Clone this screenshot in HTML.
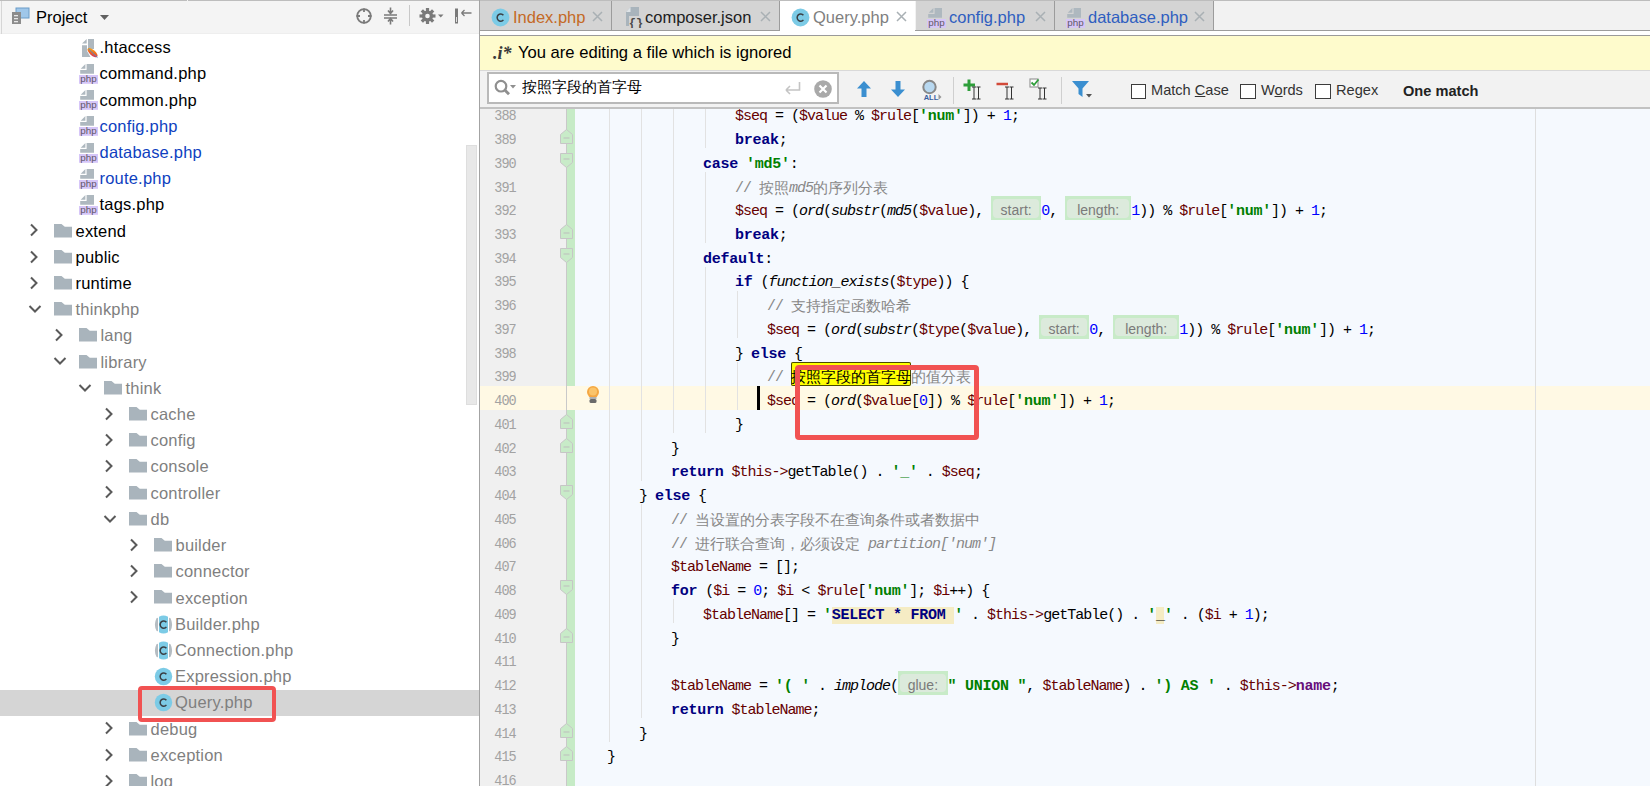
<!DOCTYPE html><html><head><meta charset="utf-8"><style>
html,body{margin:0;padding:0}
body{width:1650px;height:786px;overflow:hidden;position:relative;background:#fff;font-family:"Liberation Sans",sans-serif}
.t{position:absolute;white-space:nowrap;line-height:1;font-family:"Liberation Sans",sans-serif}
.cjk{position:absolute;white-space:nowrap;overflow:hidden;line-height:18px;font-family:"Liberation Sans",sans-serif;letter-spacing:0}
.ln{position:absolute;left:480px;width:35.8px;text-align:right;font-family:"Liberation Mono",monospace;font-size:15px;letter-spacing:-1px;line-height:16px;color:#a2a2a2;transform:scaleX(0.9);transform-origin:right center}
.cl{position:absolute;white-space:pre;font-family:"Liberation Mono",monospace;font-size:15px;letter-spacing:-1px;line-height:16px;color:#000}
.v{color:#660000}
.k{color:#000080;font-weight:bold;letter-spacing:-0.25px}
.s{color:#008000;font-weight:bold;letter-spacing:-0.25px}
.n{color:#0000ff}
.f{font-style:italic}
.c{color:#888888}
.c i{font-style:italic}
.z{display:inline-block;overflow:hidden;vertical-align:top;height:16px;font-family:"Liberation Sans",sans-serif;letter-spacing:0;font-size:14.5px;line-height:14px}
.fld{color:#660e7a;font-weight:bold;letter-spacing:-0.25px}
.mk{background:#ffff00;box-shadow:inset 0 0 0 1px #4a4a00;border-radius:2px;color:#000;display:inline-block;vertical-align:top;height:23.5px;position:relative;top:-8.2px}
.mk .z{position:relative;top:8.2px}
.sql{background:#f5ecc4;color:#000080;font-weight:bold;letter-spacing:-0.25px}
.sql2{background:#f5ecc4;color:#000;font-weight:normal;letter-spacing:-1px}
.hint{display:inline-block;vertical-align:top;position:relative;height:16px}
.hint>b{position:absolute;display:block;font-weight:normal;font-style:normal}
.ho{left:0;right:0;top:-8px;height:23.7px;background:#c8ebc8}
.hi{left:2px;right:2px;top:-5.4px;height:18.8px;background:#dceadc;border-radius:4px}
.ht{left:0;right:0;top:-8px;height:23.7px;color:#7a7a7a;font-family:"Liberation Sans",sans-serif;font-size:14px;letter-spacing:0;line-height:28px;text-align:center}
</style></head><body><div style="position:absolute;left:0px;top:0px;width:479px;height:34px;background:#f4f4f4;"></div>
<div style="position:absolute;left:0px;top:33px;width:479px;height:1px;background:#eeeeee;"></div>
<div style="position:absolute;left:0px;top:0px;width:1650px;height:1px;background:#bdbdbd;"></div>
<div style="position:absolute;left:187px;top:0px;width:1px;height:1px;background:#f4f4f4;"></div>
<div style="position:absolute;left:1px;top:1px;width:1px;height:33px;background:#d6d6d6;"></div>
<svg style="position:absolute;left:11px;top:7px" width="20" height="18" viewBox="0 0 20 18">
<rect x="5" y="1" width="13" height="10" fill="#9fc7ea" stroke="#6a9cc8" stroke-width="1"/>
<rect x="1" y="5" width="9" height="12" fill="#8c8c8c"/>
<rect x="3" y="8" width="4" height="1.3" fill="#e8e8e8"/><rect x="3" y="11" width="4" height="1.3" fill="#e8e8e8"/><rect x="3" y="14" width="4" height="1.3" fill="#e8e8e8"/>
</svg>
<div class="t" style="left:36px;top:9.28px;font-size:16.5px;color:#000;font-weight:400;">Project</div>
<svg style="position:absolute;left:99px;top:14px" width="11" height="7"><path d="M1 1 L10 1 L5.5 6 Z" fill="#606060"/></svg>
<svg style="position:absolute;left:355px;top:7px" width="18" height="18" viewBox="0 0 18 18">
<circle cx="9" cy="9" r="6.8" fill="none" stroke="#7a7a7a" stroke-width="1.8"/>
<path d="M9 1.5V5 M9 13V16.5 M1.5 9H5 M13 9H16.5" stroke="#7a7a7a" stroke-width="1.8"/></svg>
<svg style="position:absolute;left:383px;top:7px" width="15" height="18" viewBox="0 0 15 18">
<path d="M1 8H14 M1 11H14" stroke="#7a7a7a" stroke-width="1.4"/>
<path d="M7.5 0.5V5 M5 3.5L7.5 6.5L10 3.5 M7.5 17.5V13 M5 14.5L7.5 11.5L10 14.5" stroke="#7a7a7a" stroke-width="1.6" fill="none"/></svg>
<div style="position:absolute;left:409px;top:5px;width:1px;height:21px;background:#c8c8c8;"></div>
<svg style="position:absolute;left:418px;top:7px" width="28" height="18" viewBox="0 0 28 18">
<g transform="translate(9.5,9)" fill="#7a7a7a">
<circle r="5.6"/>
<rect x="-1.6" y="-8" width="3.2" height="16"/><rect x="-1.6" y="-8" width="3.2" height="16" transform="rotate(45)"/>
<rect x="-1.6" y="-8" width="3.2" height="16" transform="rotate(90)"/><rect x="-1.6" y="-8" width="3.2" height="16" transform="rotate(135)"/>
</g><circle cx="9.5" cy="9" r="2.3" fill="#f4f4f4"/>
<path d="M20 7.5H25.5L22.75 10.5Z" fill="#7a7a7a"/></svg>
<svg style="position:absolute;left:453px;top:7px" width="20" height="18" viewBox="0 0 20 18">
<rect x="2" y="1.5" width="3" height="15" fill="#7a7a7a"/><rect x="3" y="10" width="1" height="5" fill="#e0e0e0"/>
<path d="M8.5 6H18.5 M8.5 6L11.5 3 M8.5 6L11.5 9" stroke="#7a7a7a" stroke-width="1.3" fill="none"/></svg>
<div style="position:absolute;left:0px;top:690.0px;width:479px;height:26px;background:#d5d5d5;"></div>
<div style="position:absolute;left:466px;top:145px;width:11px;height:260px;background:#e8e8e8;border:1px solid #dedede;box-sizing:border-box"></div>
<svg style="position:absolute;left:82px;top:38.66px" width="17" height="20" viewBox="0 0 17 20"><defs><linearGradient id="fg" x1="0" y1="0" x2="1" y2="1"><stop offset="0" stop-color="#f5c020"/><stop offset="0.5" stop-color="#f26a1e"/><stop offset="1" stop-color="#c8207a"/></linearGradient></defs><path d="M0 4.6L4.7 0V4.6Z" fill="#aeb8bf"/><path d="M6 0H12V10H6Z" fill="#aeb8bf"/><path d="M0 6.3H5V12L8.5 18H0Z" fill="#aeb8bf"/><ellipse cx="10.5" cy="13.6" rx="6.3" ry="2.8" transform="rotate(42 10.5 13.6)" fill="url(#fg)"/><path d="M6.5 9.8L15.5 18.6" stroke="#4a90c8" stroke-width="0.9"/></svg>
<div class="t" style="left:99.5px;top:39.12px;font-size:16.5px;color:#000;font-weight:400;letter-spacing:0.2px">.htaccess</div>
<svg style="position:absolute;left:79px;top:63.86px" width="19" height="20" viewBox="0 0 19 20"><path d="M1.7 4.8L6.4 0.1V4.8Z" fill="#aeb8bf"/><path d="M7.6 0H15V9.8H1.2V6H7.6Z" fill="#aeb8bf"/><rect x="0" y="11" width="19" height="8.8" fill="#d6c6f8"/><text x="9.5" y="18.3" font-family="Liberation Sans" font-size="9.8" text-anchor="middle" fill="#5e5666">php</text></svg>
<div class="t" style="left:99.5px;top:65.33px;font-size:16.5px;color:#000;font-weight:400;letter-spacing:0.2px">command.php</div>
<svg style="position:absolute;left:79px;top:90.08px" width="19" height="20" viewBox="0 0 19 20"><path d="M1.7 4.8L6.4 0.1V4.8Z" fill="#aeb8bf"/><path d="M7.6 0H15V9.8H1.2V6H7.6Z" fill="#aeb8bf"/><rect x="0" y="11" width="19" height="8.8" fill="#d6c6f8"/><text x="9.5" y="18.3" font-family="Liberation Sans" font-size="9.8" text-anchor="middle" fill="#5e5666">php</text></svg>
<div class="t" style="left:99.5px;top:91.54px;font-size:16.5px;color:#000;font-weight:400;letter-spacing:0.2px">common.php</div>
<svg style="position:absolute;left:79px;top:116.28px" width="19" height="20" viewBox="0 0 19 20"><path d="M1.7 4.8L6.4 0.1V4.8Z" fill="#aeb8bf"/><path d="M7.6 0H15V9.8H1.2V6H7.6Z" fill="#aeb8bf"/><rect x="0" y="11" width="19" height="8.8" fill="#d6c6f8"/><text x="9.5" y="18.3" font-family="Liberation Sans" font-size="9.8" text-anchor="middle" fill="#5e5666">php</text></svg>
<div class="t" style="left:99.5px;top:117.75px;font-size:16.5px;color:#0f3fc0;font-weight:400;letter-spacing:0.2px">config.php</div>
<svg style="position:absolute;left:79px;top:142.50px" width="19" height="20" viewBox="0 0 19 20"><path d="M1.7 4.8L6.4 0.1V4.8Z" fill="#aeb8bf"/><path d="M7.6 0H15V9.8H1.2V6H7.6Z" fill="#aeb8bf"/><rect x="0" y="11" width="19" height="8.8" fill="#d6c6f8"/><text x="9.5" y="18.3" font-family="Liberation Sans" font-size="9.8" text-anchor="middle" fill="#5e5666">php</text></svg>
<div class="t" style="left:99.5px;top:143.97px;font-size:16.5px;color:#0f3fc0;font-weight:400;letter-spacing:0.2px">database.php</div>
<svg style="position:absolute;left:79px;top:168.71px" width="19" height="20" viewBox="0 0 19 20"><path d="M1.7 4.8L6.4 0.1V4.8Z" fill="#aeb8bf"/><path d="M7.6 0H15V9.8H1.2V6H7.6Z" fill="#aeb8bf"/><rect x="0" y="11" width="19" height="8.8" fill="#d6c6f8"/><text x="9.5" y="18.3" font-family="Liberation Sans" font-size="9.8" text-anchor="middle" fill="#5e5666">php</text></svg>
<div class="t" style="left:99.5px;top:170.18px;font-size:16.5px;color:#0f3fc0;font-weight:400;letter-spacing:0.2px">route.php</div>
<svg style="position:absolute;left:79px;top:194.91px" width="19" height="20" viewBox="0 0 19 20"><path d="M1.7 4.8L6.4 0.1V4.8Z" fill="#aeb8bf"/><path d="M7.6 0H15V9.8H1.2V6H7.6Z" fill="#aeb8bf"/><rect x="0" y="11" width="19" height="8.8" fill="#d6c6f8"/><text x="9.5" y="18.3" font-family="Liberation Sans" font-size="9.8" text-anchor="middle" fill="#5e5666">php</text></svg>
<div class="t" style="left:99.5px;top:196.38px;font-size:16.5px;color:#000;font-weight:400;letter-spacing:0.2px">tags.php</div>
<svg style="position:absolute;left:29px;top:223.32px" width="10" height="14"><path d="M2 1.5L7.5 7L2 12.5" stroke="#5a5a5a" stroke-width="2" fill="none"/></svg>
<svg style="position:absolute;left:54px;top:223.52px" width="18" height="14"><path d="M0 0H7.5L10.8 2.8H18V13.6H0Z" fill="#a9b4bc"/></svg>
<div class="t" style="left:75.5px;top:222.59px;font-size:16.5px;color:#000;font-weight:400;letter-spacing:0.2px">extend</div>
<svg style="position:absolute;left:29px;top:249.54px" width="10" height="14"><path d="M2 1.5L7.5 7L2 12.5" stroke="#5a5a5a" stroke-width="2" fill="none"/></svg>
<svg style="position:absolute;left:54px;top:249.74px" width="18" height="14"><path d="M0 0H7.5L10.8 2.8H18V13.6H0Z" fill="#a9b4bc"/></svg>
<div class="t" style="left:75.5px;top:248.80px;font-size:16.5px;color:#000;font-weight:400;letter-spacing:0.2px">public</div>
<svg style="position:absolute;left:29px;top:275.75px" width="10" height="14"><path d="M2 1.5L7.5 7L2 12.5" stroke="#5a5a5a" stroke-width="2" fill="none"/></svg>
<svg style="position:absolute;left:54px;top:275.94px" width="18" height="14"><path d="M0 0H7.5L10.8 2.8H18V13.6H0Z" fill="#a9b4bc"/></svg>
<div class="t" style="left:75.5px;top:275.01px;font-size:16.5px;color:#000;font-weight:400;letter-spacing:0.2px">runtime</div>
<svg style="position:absolute;left:28px;top:303.96px" width="14" height="10"><path d="M1.5 2L7 7.5L12.5 2" stroke="#5a5a5a" stroke-width="2" fill="none"/></svg>
<svg style="position:absolute;left:54px;top:302.16px" width="18" height="14"><path d="M0 0H7.5L10.8 2.8H18V13.6H0Z" fill="#a9b4bc"/></svg>
<div class="t" style="left:75.5px;top:301.23px;font-size:16.5px;color:#7f7f7f;font-weight:400;letter-spacing:0.2px">thinkphp</div>
<svg style="position:absolute;left:54px;top:328.17px" width="10" height="14"><path d="M2 1.5L7.5 7L2 12.5" stroke="#5a5a5a" stroke-width="2" fill="none"/></svg>
<svg style="position:absolute;left:79px;top:328.37px" width="18" height="14"><path d="M0 0H7.5L10.8 2.8H18V13.6H0Z" fill="#a9b4bc"/></svg>
<div class="t" style="left:100.5px;top:327.44px;font-size:16.5px;color:#7f7f7f;font-weight:400;letter-spacing:0.2px">lang</div>
<svg style="position:absolute;left:53px;top:356.38px" width="14" height="10"><path d="M1.5 2L7 7.5L12.5 2" stroke="#5a5a5a" stroke-width="2" fill="none"/></svg>
<svg style="position:absolute;left:79px;top:354.57px" width="18" height="14"><path d="M0 0H7.5L10.8 2.8H18V13.6H0Z" fill="#a9b4bc"/></svg>
<div class="t" style="left:100.5px;top:353.64px;font-size:16.5px;color:#7f7f7f;font-weight:400;letter-spacing:0.2px">library</div>
<svg style="position:absolute;left:78px;top:382.59px" width="14" height="10"><path d="M1.5 2L7 7.5L12.5 2" stroke="#5a5a5a" stroke-width="2" fill="none"/></svg>
<svg style="position:absolute;left:104px;top:380.79px" width="18" height="14"><path d="M0 0H7.5L10.8 2.8H18V13.6H0Z" fill="#a9b4bc"/></svg>
<div class="t" style="left:125.5px;top:379.86px;font-size:16.5px;color:#7f7f7f;font-weight:400;letter-spacing:0.2px">think</div>
<svg style="position:absolute;left:104px;top:406.80px" width="10" height="14"><path d="M2 1.5L7.5 7L2 12.5" stroke="#5a5a5a" stroke-width="2" fill="none"/></svg>
<svg style="position:absolute;left:129px;top:407.00px" width="18" height="14"><path d="M0 0H7.5L10.8 2.8H18V13.6H0Z" fill="#a9b4bc"/></svg>
<div class="t" style="left:150.5px;top:406.06px;font-size:16.5px;color:#7f7f7f;font-weight:400;letter-spacing:0.2px">cache</div>
<svg style="position:absolute;left:104px;top:433.01px" width="10" height="14"><path d="M2 1.5L7.5 7L2 12.5" stroke="#5a5a5a" stroke-width="2" fill="none"/></svg>
<svg style="position:absolute;left:129px;top:433.21px" width="18" height="14"><path d="M0 0H7.5L10.8 2.8H18V13.6H0Z" fill="#a9b4bc"/></svg>
<div class="t" style="left:150.5px;top:432.28px;font-size:16.5px;color:#7f7f7f;font-weight:400;letter-spacing:0.2px">config</div>
<svg style="position:absolute;left:104px;top:459.22px" width="10" height="14"><path d="M2 1.5L7.5 7L2 12.5" stroke="#5a5a5a" stroke-width="2" fill="none"/></svg>
<svg style="position:absolute;left:129px;top:459.42px" width="18" height="14"><path d="M0 0H7.5L10.8 2.8H18V13.6H0Z" fill="#a9b4bc"/></svg>
<div class="t" style="left:150.5px;top:458.49px;font-size:16.5px;color:#7f7f7f;font-weight:400;letter-spacing:0.2px">console</div>
<svg style="position:absolute;left:104px;top:485.43px" width="10" height="14"><path d="M2 1.5L7.5 7L2 12.5" stroke="#5a5a5a" stroke-width="2" fill="none"/></svg>
<svg style="position:absolute;left:129px;top:485.62px" width="18" height="14"><path d="M0 0H7.5L10.8 2.8H18V13.6H0Z" fill="#a9b4bc"/></svg>
<div class="t" style="left:150.5px;top:484.69px;font-size:16.5px;color:#7f7f7f;font-weight:400;letter-spacing:0.2px">controller</div>
<svg style="position:absolute;left:103px;top:513.63px" width="14" height="10"><path d="M1.5 2L7 7.5L12.5 2" stroke="#5a5a5a" stroke-width="2" fill="none"/></svg>
<svg style="position:absolute;left:129px;top:511.83px" width="18" height="14"><path d="M0 0H7.5L10.8 2.8H18V13.6H0Z" fill="#a9b4bc"/></svg>
<div class="t" style="left:150.5px;top:510.91px;font-size:16.5px;color:#7f7f7f;font-weight:400;letter-spacing:0.2px">db</div>
<svg style="position:absolute;left:129px;top:537.85px" width="10" height="14"><path d="M2 1.5L7.5 7L2 12.5" stroke="#5a5a5a" stroke-width="2" fill="none"/></svg>
<svg style="position:absolute;left:154px;top:538.05px" width="18" height="14"><path d="M0 0H7.5L10.8 2.8H18V13.6H0Z" fill="#a9b4bc"/></svg>
<div class="t" style="left:175.5px;top:537.12px;font-size:16.5px;color:#7f7f7f;font-weight:400;letter-spacing:0.2px">builder</div>
<svg style="position:absolute;left:129px;top:564.06px" width="10" height="14"><path d="M2 1.5L7.5 7L2 12.5" stroke="#5a5a5a" stroke-width="2" fill="none"/></svg>
<svg style="position:absolute;left:154px;top:564.26px" width="18" height="14"><path d="M0 0H7.5L10.8 2.8H18V13.6H0Z" fill="#a9b4bc"/></svg>
<div class="t" style="left:175.5px;top:563.33px;font-size:16.5px;color:#7f7f7f;font-weight:400;letter-spacing:0.2px">connector</div>
<svg style="position:absolute;left:129px;top:590.26px" width="10" height="14"><path d="M2 1.5L7.5 7L2 12.5" stroke="#5a5a5a" stroke-width="2" fill="none"/></svg>
<svg style="position:absolute;left:154px;top:590.47px" width="18" height="14"><path d="M0 0H7.5L10.8 2.8H18V13.6H0Z" fill="#a9b4bc"/></svg>
<div class="t" style="left:175.5px;top:589.53px;font-size:16.5px;color:#7f7f7f;font-weight:400;letter-spacing:0.2px">exception</div>
<svg style="position:absolute;left:153.5px;top:614.68px" width="19" height="19" viewBox="0 0 19 19"><path d="M5 1.8 Q9.5 -0.6 14 1.8 V17.2 Q9.5 19.6 5 17.2Z" fill="#7ccbe6"/><path d="M3.2 3.5 Q0.2 9.5 3.2 15.5 Z" fill="#b4bcc2" stroke="#b4bcc2" stroke-width="1.6" stroke-linejoin="round"/><path d="M15.8 3.5 Q18.8 9.5 15.8 15.5 Z" fill="#b4bcc2" stroke="#b4bcc2" stroke-width="1.6" stroke-linejoin="round"/><path d="M12.4 7.3 A3.5 3.7 0 1 0 12.4 11.9" stroke="#3a3f44" stroke-width="1.5" fill="none"/></svg>
<div class="t" style="left:175.0px;top:615.75px;font-size:16.5px;color:#7f7f7f;font-weight:400;letter-spacing:0.2px">Builder.php</div>
<svg style="position:absolute;left:153.5px;top:640.89px" width="19" height="19" viewBox="0 0 19 19"><path d="M5 1.8 Q9.5 -0.6 14 1.8 V17.2 Q9.5 19.6 5 17.2Z" fill="#7ccbe6"/><path d="M3.2 3.5 Q0.2 9.5 3.2 15.5 Z" fill="#b4bcc2" stroke="#b4bcc2" stroke-width="1.6" stroke-linejoin="round"/><path d="M15.8 3.5 Q18.8 9.5 15.8 15.5 Z" fill="#b4bcc2" stroke="#b4bcc2" stroke-width="1.6" stroke-linejoin="round"/><path d="M12.4 7.3 A3.5 3.7 0 1 0 12.4 11.9" stroke="#3a3f44" stroke-width="1.5" fill="none"/></svg>
<div class="t" style="left:175.0px;top:641.96px;font-size:16.5px;color:#7f7f7f;font-weight:400;letter-spacing:0.2px">Connection.php</div>
<svg style="position:absolute;left:153.5px;top:667.10px" width="19" height="19" viewBox="0 0 19 19"><circle cx="9.5" cy="9.5" r="8.7" fill="#7ccbe6"/><path d="M12.4 7.3 A3.5 3.7 0 1 0 12.4 11.9" stroke="#3a3f44" stroke-width="1.5" fill="none"/></svg>
<div class="t" style="left:175.0px;top:668.16px;font-size:16.5px;color:#7f7f7f;font-weight:400;letter-spacing:0.2px">Expression.php</div>
<svg style="position:absolute;left:153.5px;top:693.31px" width="19" height="19" viewBox="0 0 19 19"><circle cx="9.5" cy="9.5" r="8.7" fill="#7ccbe6"/><path d="M12.4 7.3 A3.5 3.7 0 1 0 12.4 11.9" stroke="#3a3f44" stroke-width="1.5" fill="none"/></svg>
<div class="t" style="left:175.0px;top:694.38px;font-size:16.5px;color:#7f7f7f;font-weight:400;letter-spacing:0.2px">Query.php</div>
<svg style="position:absolute;left:104px;top:721.32px" width="10" height="14"><path d="M2 1.5L7.5 7L2 12.5" stroke="#5a5a5a" stroke-width="2" fill="none"/></svg>
<svg style="position:absolute;left:129px;top:721.52px" width="18" height="14"><path d="M0 0H7.5L10.8 2.8H18V13.6H0Z" fill="#a9b4bc"/></svg>
<div class="t" style="left:150.5px;top:720.59px;font-size:16.5px;color:#7f7f7f;font-weight:400;letter-spacing:0.2px">debug</div>
<svg style="position:absolute;left:104px;top:747.53px" width="10" height="14"><path d="M2 1.5L7.5 7L2 12.5" stroke="#5a5a5a" stroke-width="2" fill="none"/></svg>
<svg style="position:absolute;left:129px;top:747.73px" width="18" height="14"><path d="M0 0H7.5L10.8 2.8H18V13.6H0Z" fill="#a9b4bc"/></svg>
<div class="t" style="left:150.5px;top:746.80px;font-size:16.5px;color:#7f7f7f;font-weight:400;letter-spacing:0.2px">exception</div>
<svg style="position:absolute;left:104px;top:773.74px" width="10" height="14"><path d="M2 1.5L7.5 7L2 12.5" stroke="#5a5a5a" stroke-width="2" fill="none"/></svg>
<svg style="position:absolute;left:129px;top:773.94px" width="18" height="14"><path d="M0 0H7.5L10.8 2.8H18V13.6H0Z" fill="#a9b4bc"/></svg>
<div class="t" style="left:150.5px;top:773.00px;font-size:16.5px;color:#7f7f7f;font-weight:400;letter-spacing:0.2px">log</div>
<div style="position:absolute;left:138px;top:686px;width:137.5px;height:35.5px;border:4.8px solid #f15252;border-radius:4px;box-sizing:border-box"></div>
<div style="position:absolute;left:479px;top:0px;width:1px;height:786px;background:#a3a3a3;"></div>
<div style="position:absolute;left:480px;top:1px;width:1170px;height:34px;background:#f2f2f2;"></div>
<div style="position:absolute;left:480px;top:30px;width:1170px;height:1px;background:#9c9c9c;"></div>
<div style="position:absolute;left:480px;top:31px;width:1170px;height:4px;background:#ffffff;"></div>
<div style="position:absolute;left:480px;top:35px;width:1170px;height:1px;background:#9a9a9a;"></div>
<div style="position:absolute;left:480px;top:1px;width:131px;height:30px;background:#d4d4d4;"></div>
<div style="position:absolute;left:480px;top:30px;width:132px;height:1px;background:#9c9c9c;"></div>
<div style="position:absolute;left:611px;top:1px;width:1px;height:30px;background:#9c9c9c;"></div>
<svg style="position:absolute;left:491px;top:8px" width="19" height="19" viewBox="0 0 19 19"><circle cx="9.5" cy="9.5" r="8.9" fill="#7ccbe6"/><path d="M12.4 7.3 A3.5 3.7 0 1 0 12.4 11.9" stroke="#3a3f44" stroke-width="1.5" fill="none"/></svg>
<div class="t" style="left:513px;top:9.47px;font-size:16.5px;color:#c46a26;font-weight:400;">Index.php</div>
<svg style="position:absolute;left:592px;top:11px" width="11" height="11"><path d="M1 1L10 10M10 1L1 10" stroke="#a9b0b4" stroke-width="1.5"/></svg>
<div style="position:absolute;left:612px;top:1px;width:167px;height:30px;background:#d4d4d4;"></div>
<div style="position:absolute;left:612px;top:30px;width:168px;height:1px;background:#9c9c9c;"></div>
<div style="position:absolute;left:779px;top:1px;width:1px;height:30px;background:#9c9c9c;"></div>
<svg style="position:absolute;left:625px;top:7px" width="20" height="21" viewBox="0 0 20 21"><path d="M1 19V5L5.5 0H14V19Z" fill="#a9b4bc"/><path d="M1 5H5.5V0Z" fill="#dfe4e8"/><rect x="4" y="9" width="14" height="12" fill="#d4d4d4"/><text x="11" y="19.5" font-family="Liberation Mono" font-size="12" font-weight="bold" text-anchor="middle" fill="#4a4a4a">{}</text></svg>
<div class="t" style="left:645px;top:9.47px;font-size:16.5px;color:#1e1e1e;font-weight:400;">composer.json</div>
<svg style="position:absolute;left:760px;top:11px" width="11" height="11"><path d="M1 1L10 10M10 1L1 10" stroke="#a9b0b4" stroke-width="1.5"/></svg>
<div style="position:absolute;left:780px;top:1px;width:135px;height:34px;background:#ffffff;"></div>
<svg style="position:absolute;left:791px;top:8px" width="19" height="19" viewBox="0 0 19 19"><circle cx="9.5" cy="9.5" r="8.9" fill="#7ccbe6"/><path d="M12.4 7.3 A3.5 3.7 0 1 0 12.4 11.9" stroke="#3a3f44" stroke-width="1.5" fill="none"/></svg>
<div class="t" style="left:813px;top:9.47px;font-size:16.5px;color:#7f7f7f;font-weight:400;">Query.php</div>
<svg style="position:absolute;left:896px;top:11px" width="11" height="11"><path d="M1 1L10 10M10 1L1 10" stroke="#a9b0b4" stroke-width="1.5"/></svg>
<div style="position:absolute;left:916px;top:1px;width:138px;height:30px;background:#d4d4d4;"></div>
<div style="position:absolute;left:916px;top:30px;width:139px;height:1px;background:#9c9c9c;"></div>
<div style="position:absolute;left:1054px;top:1px;width:1px;height:30px;background:#9c9c9c;"></div>
<svg style="position:absolute;left:927px;top:8px" width="19" height="20" viewBox="0 0 19 20"><path d="M1.7 4.8L6.4 0.1V4.8Z" fill="#aeb8bf"/><path d="M7.6 0H15V9.8H1.2V6H7.6Z" fill="#aeb8bf"/><rect x="0" y="11" width="19" height="8.8" fill="#d6c6f8"/><text x="9.5" y="18.3" font-family="Liberation Sans" font-size="9.8" text-anchor="middle" fill="#5e5666">php</text></svg>
<div class="t" style="left:949px;top:9.47px;font-size:16.5px;color:#2f5ec0;font-weight:400;">config.php</div>
<svg style="position:absolute;left:1035px;top:11px" width="11" height="11"><path d="M1 1L10 10M10 1L1 10" stroke="#a9b0b4" stroke-width="1.5"/></svg>
<div style="position:absolute;left:1055px;top:1px;width:158px;height:30px;background:#d4d4d4;"></div>
<div style="position:absolute;left:1055px;top:30px;width:159px;height:1px;background:#9c9c9c;"></div>
<div style="position:absolute;left:1213px;top:1px;width:1px;height:30px;background:#9c9c9c;"></div>
<svg style="position:absolute;left:1066px;top:8px" width="19" height="20" viewBox="0 0 19 20"><path d="M1.7 4.8L6.4 0.1V4.8Z" fill="#aeb8bf"/><path d="M7.6 0H15V9.8H1.2V6H7.6Z" fill="#aeb8bf"/><rect x="0" y="11" width="19" height="8.8" fill="#d6c6f8"/><text x="9.5" y="18.3" font-family="Liberation Sans" font-size="9.8" text-anchor="middle" fill="#5e5666">php</text></svg>
<div class="t" style="left:1088px;top:9.47px;font-size:16.5px;color:#2f5ec0;font-weight:400;">database.php</div>
<svg style="position:absolute;left:1194px;top:11px" width="11" height="11"><path d="M1 1L10 10M10 1L1 10" stroke="#a9b0b4" stroke-width="1.5"/></svg>
<div style="position:absolute;left:480px;top:36px;width:1170px;height:34px;background:#fefbcc;"></div>
<div class="t" style="left:493px;top:44px;font-family:'Liberation Serif';font-size:18px;font-weight:bold;font-style:italic;color:#3a3a3a">.i*</div>
<div class="t" style="left:518px;top:44.89px;font-size:16.6px;color:#000;font-weight:400;">You are editing a file which is ignored</div>
<div style="position:absolute;left:480px;top:70px;width:1170px;height:1px;background:#d9d9d9;"></div>
<div style="position:absolute;left:480px;top:71px;width:1170px;height:36px;background:#f2f2f2;"></div>
<div style="position:absolute;left:480px;top:107px;width:1170px;height:2px;background:#c2c2c2;"></div>
<div style="position:absolute;left:487px;top:72px;width:352px;height:32px;background:#fff;border:2px solid #b9b9b9;box-sizing:border-box"></div>
<svg style="position:absolute;left:493px;top:78px" width="26" height="20" viewBox="0 0 26 20">
<circle cx="8" cy="8.2" r="5.3" fill="none" stroke="#8f8f8f" stroke-width="2.2"/><path d="M11.8 12L16 16.3" stroke="#8f8f8f" stroke-width="2.8"/>
<path d="M17 7H23L20 10.5Z" fill="#8f8f8f"/></svg>
<div class="cjk" style="left:522px;top:78px;width:120px;height:18px;font-size:14.75px;color:#000">按照字段的首字母</div>
<svg style="position:absolute;left:783px;top:80px" width="20" height="16" viewBox="0 0 20 16">
<path d="M16.5 2V10H3 M3 10L7 6 M3 10L7 14" stroke="#c4c4c4" stroke-width="1.6" fill="none"/></svg>
<svg style="position:absolute;left:813px;top:79px" width="20" height="20" viewBox="0 0 20 20">
<circle cx="10" cy="10" r="8.8" fill="#a9a9a9"/><path d="M6.5 6.5L13.5 13.5M13.5 6.5L6.5 13.5" stroke="#fff" stroke-width="2.2"/></svg>
<svg style="position:absolute;left:855px;top:80px" width="18" height="18" viewBox="0 0 18 18">
<path d="M9 1L16 8.5H11.5V17H6.5V8.5H2Z" fill="#3b8fd0"/></svg>
<svg style="position:absolute;left:889px;top:80px" width="18" height="18" viewBox="0 0 18 18">
<path d="M9 17L16 9.5H11.5V1H6.5V9.5H2Z" fill="#3b8fd0"/></svg>
<svg style="position:absolute;left:921px;top:79px" width="22" height="22" viewBox="0 0 22 22">
<circle cx="8.5" cy="8" r="6.2" fill="#b8d8f0" stroke="#888" stroke-width="2"/>
<text x="10" y="20.5" font-family="Liberation Sans" font-size="7.5" font-weight="bold" text-anchor="middle" fill="#3a5fa0">ALL</text>
<path d="M17.5 15L20.5 18L17.5 21" fill="#999"/></svg>
<div style="position:absolute;left:953px;top:77px;width:1px;height:27px;background:#cfcfcf;"></div>
<svg style="position:absolute;left:963px;top:79px" width="22" height="22" viewBox="0 0 22 22">
<path d="M6 0.5V12 M0.5 6H12" stroke="#2e9e3a" stroke-width="3"/>
<path d="M9 8H13 M11 8V20 M9 20H13 M13.5 8H17.5 M15.5 8V20 M13.5 20H17.5" stroke="#333" stroke-width="1"/></svg>
<svg style="position:absolute;left:996px;top:79px" width="22" height="22" viewBox="0 0 22 22">
<path d="M0.5 5H12" stroke="#d24a3a" stroke-width="2.5"/>
<path d="M9 8H13 M11 8V20 M9 20H13 M13.5 8H17.5 M15.5 8V20 M13.5 20H17.5" stroke="#333" stroke-width="1"/></svg>
<svg style="position:absolute;left:1029px;top:78px" width="22" height="22" viewBox="0 0 22 22">
<rect x="1" y="1" width="8" height="8" fill="#fff" stroke="#999" stroke-width="1.2"/><path d="M2.5 4.5L5 7L9.5 1.5" stroke="#2e9e3a" stroke-width="1.8" fill="none"/>
<path d="M9 10H13 M11 10V21 M9 21H13 M13.5 10H17.5 M15.5 10V21 M13.5 21H17.5" stroke="#333" stroke-width="1"/></svg>
<div style="position:absolute;left:1061px;top:77px;width:1px;height:27px;background:#cfcfcf;"></div>
<svg style="position:absolute;left:1071px;top:80px" width="22" height="20" viewBox="0 0 22 20">
<path d="M1 1H18L11.5 8.5V17L7.5 14V8.5Z" fill="#3b8fd0"/><path d="M15 14H21L18 17.5Z" fill="#555"/></svg>
<div style="position:absolute;left:1130.5px;top:83.5px;width:15.5px;height:15.5px;background:#fff;border:1px solid #3c3c3c;box-sizing:border-box"></div>
<div style="position:absolute;left:1240px;top:83.5px;width:15.5px;height:15.5px;background:#fff;border:1px solid #3c3c3c;box-sizing:border-box"></div>
<div style="position:absolute;left:1315px;top:83.5px;width:15.5px;height:15.5px;background:#fff;border:1px solid #3c3c3c;box-sizing:border-box"></div>
<div class="t" style="left:1151px;top:83.39px;font-size:14.6px;color:#333;font-weight:400;">Match <u>C</u>ase</div>
<div class="t" style="left:1261px;top:83.39px;font-size:14.6px;color:#333;font-weight:400;">W<u>o</u>rds</div>
<div class="t" style="left:1336px;top:83.39px;font-size:14.6px;color:#333;font-weight:400;">Re<u>g</u>ex</div>
<div class="t" style="left:1403px;top:83.89px;font-size:14.6px;color:#222;font-weight:700;">One match</div>
<div style="position:absolute;left:480px;top:109px;width:86px;height:677px;background:#f0f0f0;"></div>
<div style="position:absolute;left:566px;top:109px;width:1px;height:677px;background:#c9c9c9;"></div>
<div style="position:absolute;left:567px;top:109px;width:8px;height:677px;background:#c6ebc6;"></div>
<div style="position:absolute;left:575px;top:109px;width:1075px;height:677px;background:#f5f9fe;"></div>
<div style="position:absolute;left:480px;top:385.78px;width:86px;height:23.74px;background:#fff9e4;"></div>
<div style="position:absolute;left:567px;top:385.78px;width:1083px;height:23.74px;background:#fff9e4;"></div>
<div style="position:absolute;left:1535px;top:109px;width:1px;height:677px;background:#dedede;"></div>
<div style="position:absolute;left:609px;top:109px;width:1px;height:632.88px;background:#e2e2e2;"></div>
<div style="position:absolute;left:641px;top:109px;width:1px;height:371.74px;background:#e2e2e2;"></div>
<div style="position:absolute;left:641px;top:504.48px;width:1px;height:213.66px;background:#e2e2e2;"></div>
<div style="position:absolute;left:673px;top:109px;width:1px;height:324.26px;background:#e2e2e2;"></div>
<div style="position:absolute;left:673px;top:599.44px;width:1px;height:23.74px;background:#e2e2e2;"></div>
<div style="position:absolute;left:705px;top:109px;width:1px;height:39.38px;background:#e2e2e2;"></div>
<div style="position:absolute;left:705px;top:172.12px;width:1px;height:71.22px;background:#e2e2e2;"></div>
<div style="position:absolute;left:705px;top:267.08px;width:1px;height:166.18px;background:#e2e2e2;"></div>
<div style="position:absolute;left:737px;top:290.82px;width:1px;height:47.48px;background:#e2e2e2;"></div>
<div style="position:absolute;left:737px;top:362.04px;width:1px;height:47.48px;background:#e2e2e2;"></div>
<div class="ln" style="top:109.30px">388</div>
<div class="ln" style="top:133.04px">389</div>
<div class="ln" style="top:156.78px">390</div>
<div class="ln" style="top:180.52px">391</div>
<div class="ln" style="top:204.26px">392</div>
<div class="ln" style="top:228.00px">393</div>
<div class="ln" style="top:251.74px">394</div>
<div class="ln" style="top:275.48px">395</div>
<div class="ln" style="top:299.22px">396</div>
<div class="ln" style="top:322.96px">397</div>
<div class="ln" style="top:346.70px">398</div>
<div class="ln" style="top:370.44px">399</div>
<div class="ln" style="top:394.18px">400</div>
<div class="ln" style="top:417.92px">401</div>
<div class="ln" style="top:441.66px">402</div>
<div class="ln" style="top:465.40px">403</div>
<div class="ln" style="top:489.14px">404</div>
<div class="ln" style="top:512.88px">405</div>
<div class="ln" style="top:536.62px">406</div>
<div class="ln" style="top:560.36px">407</div>
<div class="ln" style="top:584.10px">408</div>
<div class="ln" style="top:607.84px">409</div>
<div class="ln" style="top:631.58px">410</div>
<div class="ln" style="top:655.32px">411</div>
<div class="ln" style="top:679.06px">412</div>
<div class="ln" style="top:702.80px">413</div>
<div class="ln" style="top:726.54px">414</div>
<div class="ln" style="top:750.28px">415</div>
<div class="ln" style="top:774.02px">416</div>
<svg style="position:absolute;left:560px;top:129.01px" width="13" height="15" viewBox="0 0 13 15"><path d="M0.5 14.5V5.5L6.5 0.5L12.5 5.5V14.5Z" fill="#c8ebc8" stroke="#c6c6c6" stroke-width="1"/><path d="M3.5 9H9.5" stroke="#bdbdbd" stroke-width="1"/></svg>
<svg style="position:absolute;left:560px;top:152.75px" width="13" height="15" viewBox="0 0 13 15"><path d="M0.5 0.5V9.5L6.5 14.5L12.5 9.5V0.5Z" fill="#c8ebc8" stroke="#c6c6c6" stroke-width="1"/><path d="M3.5 6H9.5" stroke="#bdbdbd" stroke-width="1"/></svg>
<svg style="position:absolute;left:560px;top:223.97px" width="13" height="15" viewBox="0 0 13 15"><path d="M0.5 14.5V5.5L6.5 0.5L12.5 5.5V14.5Z" fill="#c8ebc8" stroke="#c6c6c6" stroke-width="1"/><path d="M3.5 9H9.5" stroke="#bdbdbd" stroke-width="1"/></svg>
<svg style="position:absolute;left:560px;top:247.71px" width="13" height="15" viewBox="0 0 13 15"><path d="M0.5 0.5V9.5L6.5 14.5L12.5 9.5V0.5Z" fill="#c8ebc8" stroke="#c6c6c6" stroke-width="1"/><path d="M3.5 6H9.5" stroke="#bdbdbd" stroke-width="1"/></svg>
<svg style="position:absolute;left:560px;top:413.89px" width="13" height="15" viewBox="0 0 13 15"><path d="M0.5 14.5V5.5L6.5 0.5L12.5 5.5V14.5Z" fill="#c8ebc8" stroke="#c6c6c6" stroke-width="1"/><path d="M3.5 9H9.5" stroke="#bdbdbd" stroke-width="1"/></svg>
<svg style="position:absolute;left:560px;top:437.63px" width="13" height="15" viewBox="0 0 13 15"><path d="M0.5 14.5V5.5L6.5 0.5L12.5 5.5V14.5Z" fill="#c8ebc8" stroke="#c6c6c6" stroke-width="1"/><path d="M3.5 9H9.5" stroke="#bdbdbd" stroke-width="1"/></svg>
<svg style="position:absolute;left:560px;top:485.11px" width="13" height="15" viewBox="0 0 13 15"><path d="M0.5 0.5V9.5L6.5 14.5L12.5 9.5V0.5Z" fill="#c8ebc8" stroke="#c6c6c6" stroke-width="1"/><path d="M3.5 6H9.5" stroke="#bdbdbd" stroke-width="1"/></svg>
<svg style="position:absolute;left:560px;top:580.07px" width="13" height="15" viewBox="0 0 13 15"><path d="M0.5 0.5V9.5L6.5 14.5L12.5 9.5V0.5Z" fill="#c8ebc8" stroke="#c6c6c6" stroke-width="1"/><path d="M3.5 6H9.5" stroke="#bdbdbd" stroke-width="1"/></svg>
<svg style="position:absolute;left:560px;top:627.55px" width="13" height="15" viewBox="0 0 13 15"><path d="M0.5 14.5V5.5L6.5 0.5L12.5 5.5V14.5Z" fill="#c8ebc8" stroke="#c6c6c6" stroke-width="1"/><path d="M3.5 9H9.5" stroke="#bdbdbd" stroke-width="1"/></svg>
<svg style="position:absolute;left:560px;top:722.51px" width="13" height="15" viewBox="0 0 13 15"><path d="M0.5 14.5V5.5L6.5 0.5L12.5 5.5V14.5Z" fill="#c8ebc8" stroke="#c6c6c6" stroke-width="1"/><path d="M3.5 9H9.5" stroke="#bdbdbd" stroke-width="1"/></svg>
<svg style="position:absolute;left:560px;top:746.25px" width="13" height="15" viewBox="0 0 13 15"><path d="M0.5 14.5V5.5L6.5 0.5L12.5 5.5V14.5Z" fill="#c8ebc8" stroke="#c6c6c6" stroke-width="1"/><path d="M3.5 9H9.5" stroke="#bdbdbd" stroke-width="1"/></svg>
<svg style="position:absolute;left:585px;top:385.28px" width="16" height="20" viewBox="0 0 16 20">
<circle cx="8" cy="7" r="6" fill="#f5a742"/><circle cx="8" cy="6.5" r="4" fill="#fbc46a"/>
<rect x="4.5" y="12" width="7" height="2" fill="#b0b0b0"/><rect x="4.5" y="14" width="7" height="4" rx="1.5" fill="#6a6a6a"/></svg>
<div class="cl" style="left:735px;top:109.30px"><span class="v">$seq</span> = (<span class="v">$value</span> % <span class="v">$rule</span>[<span class="s">'num'</span>]) + <span class="n">1</span>;</div>
<div class="cl" style="left:735px;top:133.04px"><span class="k">break</span>;</div>
<div class="cl" style="left:703px;top:156.78px"><span class="k">case</span> <span class="s">'md5'</span>:</div>
<div class="cl" style="left:735px;top:180.52px"><span class="c">// <span class="z" style="width:30px">按照</span><i>md5</i><span class="z" style="width:75px">的序列分表</span></span></div>
<div class="cl" style="left:735px;top:204.26px"><span class="v">$seq</span> = (<span class="f">ord</span>(<span class="f">substr</span>(<span class="f">md5</span>(<span class="v">$value</span>), <span class="hint" style="width:50px"><b class="ho"></b><b class="hi"></b><b class="ht">start:</b></span><span class="n">0</span>, <span class="hint" style="width:66px"><b class="ho"></b><b class="hi"></b><b class="ht">length:</b></span><span class="n">1</span>)) % <span class="v">$rule</span>[<span class="s">'num'</span>]) + <span class="n">1</span>;</div>
<div class="cl" style="left:735px;top:228.00px"><span class="k">break</span>;</div>
<div class="cl" style="left:703px;top:251.74px"><span class="k">default</span>:</div>
<div class="cl" style="left:735px;top:275.48px"><span class="k">if</span> (<span class="f">function_exists</span>(<span class="v">$type</span>)) {</div>
<div class="cl" style="left:767px;top:299.22px"><span class="c">// <span class="z" style="width:120px">支持指定函数哈希</span></span></div>
<div class="cl" style="left:767px;top:322.96px"><span class="v">$seq</span> = (<span class="f">ord</span>(<span class="f">substr</span>(<span class="v">$type</span>(<span class="v">$value</span>), <span class="hint" style="width:50px"><b class="ho"></b><b class="hi"></b><b class="ht">start:</b></span><span class="n">0</span>, <span class="hint" style="width:66px"><b class="ho"></b><b class="hi"></b><b class="ht">length:</b></span><span class="n">1</span>)) % <span class="v">$rule</span>[<span class="s">'num'</span>]) + <span class="n">1</span>;</div>
<div class="cl" style="left:735px;top:346.70px">} <span class="k">else</span> {</div>
<div class="cl" style="left:767px;top:370.44px"><span class="c">// <span class="mk"><span class="z" style="width:120px">按照字段的首字母</span></span><span class="z" style="width:60px">的值分表</span></span></div>
<div class="cl" style="left:767px;top:394.18px"><span class="v">$seq</span> = (<span class="f">ord</span>(<span class="v">$value</span>[<span class="n">0</span>]) % <span class="v">$rule</span>[<span class="s">'num'</span>]) + <span class="n">1</span>;</div>
<div class="cl" style="left:735px;top:417.92px">}</div>
<div class="cl" style="left:671px;top:441.66px">}</div>
<div class="cl" style="left:671px;top:465.40px"><span class="k">return</span> <span class="v">$this-></span>getTable() . <span class="s">'_'</span> . <span class="v">$seq</span>;</div>
<div class="cl" style="left:639px;top:489.14px">} <span class="k">else</span> {</div>
<div class="cl" style="left:671px;top:512.88px"><span class="c">// <span class="z" style="width:285px">当设置的分表字段不在查询条件或者数据中</span></span></div>
<div class="cl" style="left:671px;top:536.62px"><span class="c">// <span class="z" style="width:90px">进行联合查询</span><span class="z" style="width:15px">，</span><span class="z" style="width:60px">必须设定</span> <i>partition['num']</i></span></div>
<div class="cl" style="left:671px;top:560.36px"><span class="v">$tableName</span> = [];</div>
<div class="cl" style="left:671px;top:584.10px"><span class="k">for</span> (<span class="v">$i</span> = <span class="n">0</span>; <span class="v">$i</span> &lt; <span class="v">$rule</span>[<span class="s">'num'</span>]; <span class="v">$i</span>++) {</div>
<div class="cl" style="left:703px;top:607.84px"><span class="v">$tableName</span>[] = <span class="s">'<span class="sql">SELECT * FROM </span>'</span> . <span class="v">$this-></span>getTable() . <span class="s">'<span class="sql2">_</span>'</span> . (<span class="v">$i</span> + <span class="n">1</span>);</div>
<div class="cl" style="left:671px;top:631.58px">}</div>
<div class="cl" style="left:671px;top:679.06px"><span class="v">$tableName</span> = <span class="s">'( '</span> . <span class="f">implode</span>(<span class="hint" style="width:49.5px"><b class="ho"></b><b class="hi"></b><b class="ht">glue:</b></span><span class="s">" UNION "</span>, <span class="v">$tableName</span>) . <span class="s">') AS '</span> . <span class="v">$this-></span><span class="fld">name</span>;</div>
<div class="cl" style="left:671px;top:702.80px"><span class="k">return</span> <span class="v">$tableName</span>;</div>
<div class="cl" style="left:639px;top:726.54px">}</div>
<div class="cl" style="left:607px;top:750.28px">}</div>
<div style="position:absolute;left:757px;top:385.78px;width:3px;height:23.74px;background:#000;"></div>
<div style="position:absolute;left:795px;top:365px;width:183.5px;height:74.5px;border:5px solid #f15252;border-radius:4px;box-sizing:border-box"></div></body></html>
